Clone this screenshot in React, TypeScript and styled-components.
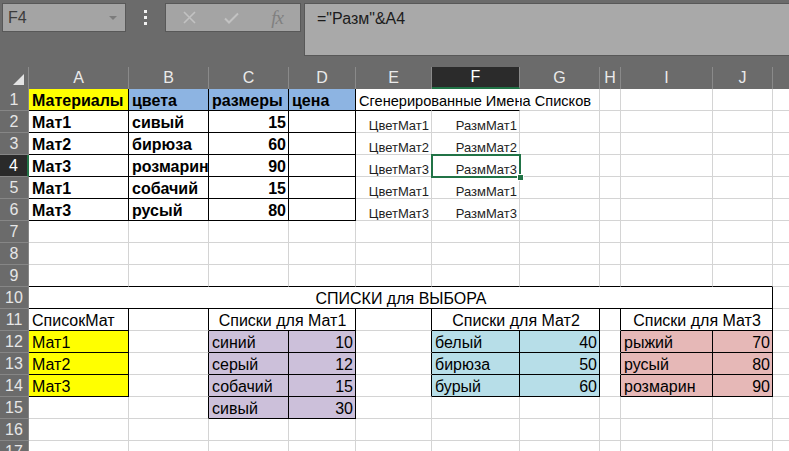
import React from 'react';
import styled, { createGlobalStyle } from 'styled-components';

const GlobalStyle = createGlobalStyle`
  html, body { margin: 0; padding: 0; background: #6b6b6b; overflow: hidden; }
  body { font-family: "Liberation Sans", Arial, sans-serif; }
`;

const COL_W = [100, 80, 80, 67, 76, 88, 80, 21, 92, 60, 60];
const LETTERS = ['A', 'B', 'C', 'D', 'E', 'F', 'G', 'H', 'I', 'J', 'K'];
const ROWS = 17;
const ACTIVE_COL = 6;
const ACTIVE_ROW = 4;
const GRID = '#d4d4d4';
const BLACK = '#000';

type Align = 'left' | 'right' | 'center';
type CellDef = {
  text?: string;
  bg?: string;
  align?: Align;
  bold?: boolean;
  size?: number;
  span?: number;
  overflow?: boolean;
};

const YELLOW = '#ffff00';
const HEAD_BLUE = '#8db4e2';
const PURPLE = '#ccc0da';
const LBLUE = '#b7dee8';
const PINK = '#e6b8b7';

const data: Record<string, CellDef> = {
  A1: { text: 'Материалы', bg: YELLOW, bold: true },
  B1: { text: 'цвета', bg: HEAD_BLUE, bold: true },
  C1: { text: 'размеры', bg: HEAD_BLUE, bold: true },
  D1: { text: 'цена', bg: HEAD_BLUE, bold: true },
  E1: { text: 'Сгенерированные Имена Списков', size: 14.6, overflow: true },
  A10: { text: 'СПИСКИ для ВЫБОРА', span: 10, align: 'center' },
  A11: { text: 'СписокМат' },
  C11: { text: 'Списки для Мат1', span: 2, align: 'center' },
  F11: { text: 'Списки для Мат2', span: 2, align: 'center' },
  I11: { text: 'Списки для Мат3', span: 2, align: 'center' },
};

const main: [string, string, string][] = [
  ['Мат1', 'сивый', '15'],
  ['Мат2', 'бирюза', '60'],
  ['Мат3', 'розмарин', '90'],
  ['Мат1', 'собачий', '15'],
  ['Мат3', 'русый', '80'],
];
main.forEach(([m, c, s], i) => {
  const r = i + 2;
  data[`A${r}`] = { text: m, bold: true };
  data[`B${r}`] = { text: c, bold: true };
  data[`C${r}`] = { text: s, bold: true, align: 'right' };
  data[`E${r}`] = { text: `Цвет${m}`, size: 13, align: 'right' };
  data[`F${r}`] = { text: `Разм${m}`, size: 13, align: 'right' };
});

['Мат1', 'Мат2', 'Мат3'].forEach((m, i) => {
  data[`A${12 + i}`] = { text: m, bg: YELLOW };
});

const addList = (col1: string, col2: string, bg: string, items: [string, string][]) => {
  items.forEach(([n, v], i) => {
    data[`${col1}${12 + i}`] = { text: n, bg };
    data[`${col2}${12 + i}`] = { text: v, bg, align: 'right' };
  });
};
addList('C', 'D', PURPLE, [['синий', '10'], ['серый', '12'], ['собачий', '15'], ['сивый', '30']]);
addList('F', 'G', LBLUE, [['белый', '40'], ['бирюза', '50'], ['бурый', '60']]);
addList('I', 'J', PINK, [['рыжий', '70'], ['русый', '80'], ['розмарин', '90']]);

// black edges
const hEdges = new Set<string>();
const vEdges = new Set<string>();
const hideV = new Set<string>(['1,5', '1,6']);
const allGrid = (r1: number, c1: number, r2: number, c2: number) => {
  for (let r = r1 - 1; r <= r2; r++) for (let c = c1; c <= c2; c++) hEdges.add(`${r},${c}`);
  for (let c = c1 - 1; c <= c2; c++) for (let r = r1; r <= r2; r++) vEdges.add(`${r},${c}`);
};
const outline = (r1: number, c1: number, r2: number, c2: number) => {
  for (let c = c1; c <= c2; c++) {
    hEdges.add(`${r1 - 1},${c}`);
    hEdges.add(`${r2},${c}`);
  }
  for (let r = r1; r <= r2; r++) {
    vEdges.add(`${r},${c1 - 1}`);
    vEdges.add(`${r},${c2}`);
  }
};
allGrid(1, 1, 6, 4);
hEdges.add('1,5');
hEdges.add('1,6');
outline(10, 1, 10, 10);
allGrid(11, 1, 14, 1);
outline(11, 3, 11, 4);
allGrid(12, 3, 15, 4);
outline(11, 6, 11, 7);
allGrid(12, 6, 14, 7);
outline(11, 9, 11, 10);
allGrid(12, 9, 14, 10);

/* ---------- toolbar ---------- */

const Toolbar = styled.div`
  height: 67px;
  background: #6b6b6b;
  display: flex;
  align-items: flex-start;
  padding: 3px 0 0 2px;
  box-sizing: border-box;
  overflow: hidden;
`;

const NameBox = styled.div`
  position: relative;
  width: 124px;
  height: 29px;
  box-sizing: border-box;
  background: #a4a4a4;
  border: 1px solid #585858;
  color: #3c3c3c;
  font-size: 16px;
  line-height: 27px;
  padding-left: 5px;
`;

const DropArrow = styled.span`
  position: absolute;
  right: 8px;
  top: 12px;
  width: 0;
  height: 0;
  border-left: 4px solid transparent;
  border-right: 4px solid transparent;
  border-top: 4px solid #7c7c7c;
`;

const DotsWrap = styled.div`
  width: 39px;
  height: 29px;
  display: flex;
  flex-direction: column;
  align-items: center;
  justify-content: center;
  gap: 3px;
`;

const Dot = styled.span`
  width: 3px;
  height: 3px;
  background: #f2f2f2;
`;

const FxBox = styled.div`
  width: 136px;
  height: 29px;
  box-sizing: border-box;
  background: #a4a4a4;
  border: 1px solid #585858;
  display: flex;
  align-items: center;
  padding: 0 0 0 14px;
`;

const IconSlot = styled.div<{ $w: number }>`
  width: ${(p) => p.$w}px;
  height: 27px;
  display: flex;
  align-items: center;
  justify-content: center;
`;

const FxText = styled.span`
  font-family: "Liberation Serif", "Times New Roman", serif;
  font-style: italic;
  font-size: 19px;
  color: #808080;
  letter-spacing: -1px;
`;

const FormulaBar = styled.div`
  flex: 1;
  margin-left: 3px;
  margin-right: -3px;
  height: 53px;
  box-sizing: border-box;
  background: #a9a9a9;
  border: 1px solid #585858;
  color: #1c1c1c;
  font-size: 16px;
  padding: 6px 0 0 12px;
  white-space: nowrap;
`;

/* ---------- sheet ---------- */

const Sheet = styled.div`
  display: grid;
  grid-template-columns: 29px ${COL_W.map((w) => `${w}px`).join(' ')};
  grid-auto-rows: 22px;
  background: #fff;
  font-family: "Liberation Sans", Arial, sans-serif;
`;

const Corner = styled.div`
  background: #6b6b6b;
  border-right: 1px solid #8a8a8a;
  box-sizing: border-box;
  display: flex;
  align-items: flex-end;
  justify-content: flex-end;
  padding: 0 4px 4px 0;
`;

const ColHeader = styled.div<{ $active?: boolean }>`
  background: ${(p) => (p.$active ? '#2b2b2b' : '#6b6b6b')};
  color: ${(p) => (p.$active ? '#ffffff' : '#eaeaea')};
  border-right: 1px solid #8a8a8a;
  border-bottom: ${(p) => (p.$active ? '2px solid #217346' : '0')};
  box-sizing: border-box;
  font-size: 16px;
  display: flex;
  align-items: center;
  justify-content: center;
  overflow: hidden;
`;

const RowHeader = styled.div<{ $active?: boolean }>`
  background: ${(p) => (p.$active ? '#2a2a2a' : '#6b6b6b')};
  color: ${(p) => (p.$active ? '#ffffff' : '#e6e6e6')};
  border-bottom: 1px solid #868686;
  border-right: ${(p) => (p.$active ? '2px solid #217346' : '1px solid #868686')};
  box-sizing: border-box;
  font-size: 16px;
  display: flex;
  align-items: center;
  justify-content: center;
`;

const Cell = styled.div<{
  $bg?: string;
  $align: Align;
  $bold?: boolean;
  $size: number;
  $br: string;
  $bb: string;
  $span: number;
  $overflow?: boolean;
  $raised?: boolean;
}>`
  grid-column: span ${(p) => p.$span};
  position: relative;
  z-index: ${(p) => (p.$raised ? 2 : 'auto')};
  box-sizing: border-box;
  height: 22px;
  background: ${(p) => p.$bg ?? 'transparent'};
  border-right: 1px solid ${(p) => p.$br};
  border-bottom: 1px solid ${(p) => p.$bb};
  display: flex;
  align-items: flex-end;
  justify-content: ${(p) =>
    p.$align === 'right' ? 'flex-end' : p.$align === 'center' ? 'center' : 'flex-start'};
  padding: 0 2px 0 3px;
  font-size: ${(p) => p.$size}px;
  font-weight: ${(p) => (p.$bold ? 700 : 400)};
  line-height: ${(p) => (p.$size < 14 ? 12 : 18)}px;
  white-space: nowrap;
  overflow: ${(p) => (p.$overflow ? 'visible' : 'hidden')};
  color: ${(p) => (p.$size < 14 ? '#1e1e1e' : '#000')};
`;

const Selection = styled.div`
  position: absolute;
  left: -1px;
  top: -1px;
  right: -2px;
  bottom: -2px;
  border: 2px solid #217346;
  pointer-events: none;
`;

const FillHandle = styled.div`
  position: absolute;
  right: -5px;
  bottom: -5px;
  width: 5px;
  height: 5px;
  background: #217346;
  border: 1px solid #fff;
`;

function renderRow(r: number) {
  const out: React.ReactNode[] = [];
  out.push(
    <RowHeader key={`rh${r}`} $active={r === ACTIVE_ROW}>
      {r}
    </RowHeader>
  );
  let c = 1;
  while (c <= LETTERS.length) {
    const key = `${LETTERS[c - 1]}${r}`;
    const def = data[key] ?? {};
    const span = def.span ?? 1;
    const last = c + span - 1;
    const vKey = `${r},${last}`;
    const br = vEdges.has(vKey) ? BLACK : hideV.has(vKey) ? '#fff' : GRID;
    const bb = hEdges.has(`${r},${c}`) ? BLACK : GRID;
    const selected = r === ACTIVE_ROW && c === ACTIVE_COL;
    out.push(
      <Cell
        key={key}
        $bg={def.bg}
        $align={def.align ?? 'left'}
        $bold={def.bold}
        $size={def.size ?? 16}
        $br={br}
        $bb={bb}
        $span={span}
        $overflow={def.overflow || selected}
        $raised={selected}
      >
        {def.text ?? ''}
        {selected && (
          <Selection>
            <FillHandle />
          </Selection>
        )}
      </Cell>
    );
    c = last + 1;
  }
  return out;
}

export default function App() {
  return (
    <>
      <GlobalStyle />
      <Toolbar>
        <NameBox>
          F4
          <DropArrow />
        </NameBox>
        <DotsWrap>
          <Dot />
          <Dot />
          <Dot />
        </DotsWrap>
        <FxBox>
          <IconSlot $w={18}>
            <svg width="13" height="13" viewBox="0 0 13 13">
              <path d="M1 1 L12 12 M12 1 L1 12" stroke="#c2c2c2" strokeWidth="1.6" fill="none" />
            </svg>
          </IconSlot>
          <IconSlot $w={66}>
            <svg width="15" height="12" viewBox="0 0 15 12">
              <path d="M1 6.5 L5 10.5 L14 1.5" stroke="#c2c2c2" strokeWidth="2" fill="none" />
            </svg>
          </IconSlot>
          <IconSlot $w={26}>
            <FxText>fx</FxText>
          </IconSlot>
        </FxBox>
        <FormulaBar>="Разм"&amp;A4</FormulaBar>
      </Toolbar>
      <Sheet>
        <Corner>
          <svg width="11" height="11" viewBox="0 0 11 11">
            <path d="M11 0 L11 11 L0 11 Z" fill="#e4e4e4" />
          </svg>
        </Corner>
        {LETTERS.map((l, i) => (
          <ColHeader key={l} $active={i + 1 === ACTIVE_COL}>
            {i < 10 ? l : ''}
          </ColHeader>
        ))}
        {Array.from({ length: ROWS }, (_, i) => renderRow(i + 1))}
      </Sheet>
    </>
  );
}
